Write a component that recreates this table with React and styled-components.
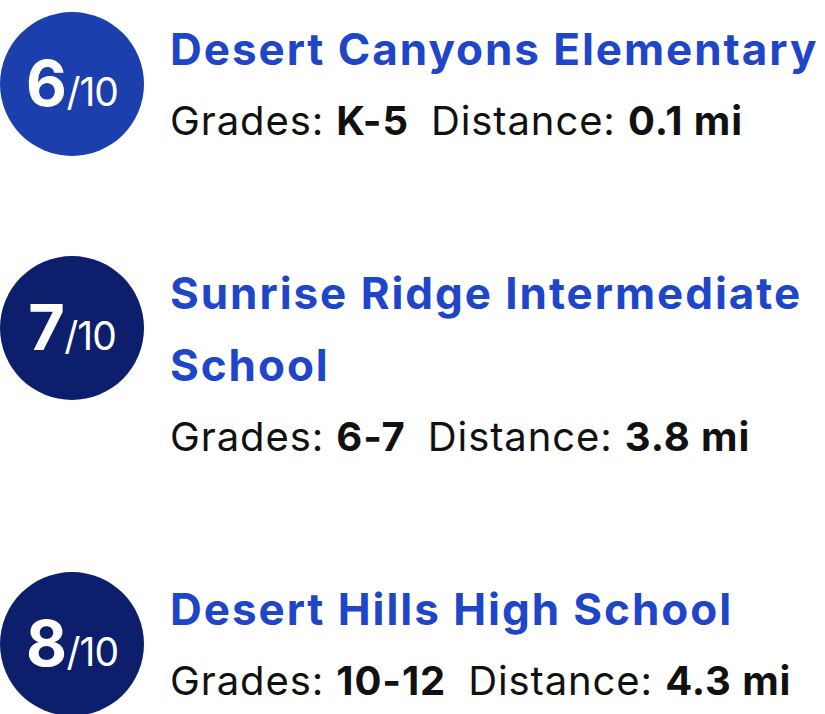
import styled, { createGlobalStyle } from 'styled-components';

const GlobalStyle = createGlobalStyle`
  html, body {
    margin: 0;
    padding: 0;
    background: #ffffff;
  }
  body {
    font-family: Inter, "Noto Sans", sans-serif;
    color: #111111;
  }
`;

const List = styled.div`
  display: flex;
  flex-direction: column;
  gap: 99px;
  padding: 12px 0 0 0;
`;

const Item = styled.div`
  display: flex;
  align-items: flex-start;
  gap: 26px;
`;

const Badge = styled.div`
  flex: 0 0 144px;
  width: 144px;
  height: 144px;
  border-radius: 50%;
  background: ${({ $tone }) => ($tone === 'bright' ? '#1c3fae' : '#0d1f6c')};
  color: #ffffff;
  display: flex;
  align-items: baseline;
  justify-content: center;
  padding-top: 40px;
  box-sizing: border-box;

  .score {
    font-size: 63px;
    font-weight: 700;
    line-height: 62px;
    letter-spacing: -0.5px;
  }

  .total {
    font-size: 39px;
    font-weight: 400;
    line-height: 62px;
    letter-spacing: -1px;
  }
`;

const Info = styled.div`
  display: flex;
  flex-direction: column;
  padding-top: 1px;
`;

const Name = styled.div`
  color: #1f45c8;
  font-size: 44px;
  font-weight: 700;
  line-height: 72px;
  letter-spacing: 1.95px;
`;

const Meta = styled.div`
  display: flex;
  gap: 22px;
  font-size: 40px;
  line-height: 72px;
  letter-spacing: 0.9px;

  b {
    font-weight: 700;
  }
`;

const schools = [
  { score: 6, name: 'Desert Canyons Elementary', grades: 'K-5', distance: '0.1 mi', tone: 'bright' },
  { score: 7, name: 'Sunrise Ridge Intermediate School', grades: '6-7', distance: '3.8 mi', tone: 'dark' },
  { score: 8, name: 'Desert Hills High School', grades: '10-12', distance: '4.3 mi', tone: 'dark' },
];

export default function App() {
  return (
    <>
      <GlobalStyle />
      <List>
        {schools.map(({ score, name, grades, distance, tone }) => (
          <Item key={name}>
            <Badge $tone={tone}>
              <span className="score">{score}</span>
              <span className="total">/10</span>
            </Badge>
            <Info>
              <Name>{name}</Name>
              <Meta>
                <span>
                  Grades: <b>{grades}</b>
                </span>
                <span>
                  Distance: <b>{distance}</b>
                </span>
              </Meta>
            </Info>
          </Item>
        ))}
      </List>
    </>
  );
}
